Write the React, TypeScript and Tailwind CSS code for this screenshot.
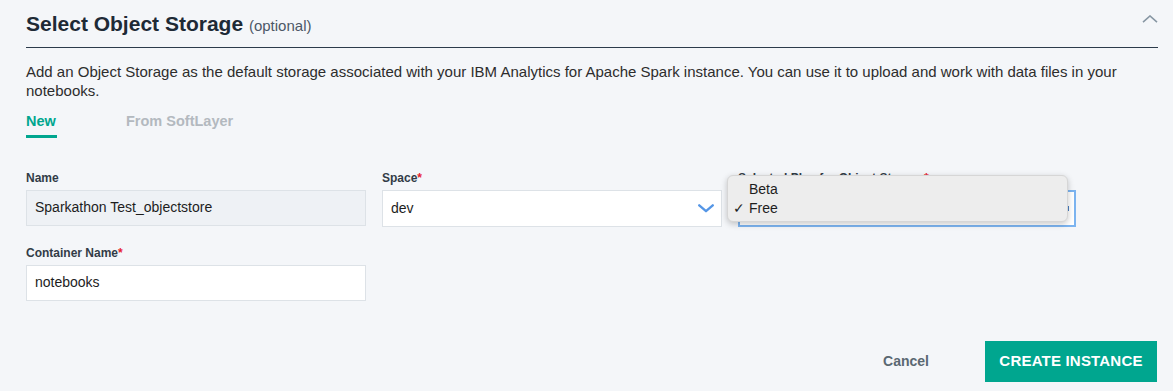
import { useState } from "react";

const font = { fontFamily: '"Liberation Sans", Arial, sans-serif' };

function Label({ text, required }: { text: string; required?: boolean }) {
  return (
    <p className="mb-[4px] h-[16px] text-[12px] font-bold leading-[16px] text-[#323c47]">
      {text}
      {required && <span className="text-[#e71d32]">*</span>}
    </p>
  );
}

function Chevron({ className }: { className?: string }) {
  return (
    <svg viewBox="0 0 18 10" className={className} fill="none">
      <path d="M1.5 1.5 9 8l7.5-6.5" stroke="currentColor" strokeWidth="2.6" strokeLinecap="round" strokeLinejoin="round" />
    </svg>
  );
}

export default function App() {
  const [tab, setTab] = useState("new");

  return (
    <div style={font} className="relative h-[391px] w-[1173px] overflow-hidden bg-[#f4f6f9] pl-[26px] pr-[15px]">
      {/* header */}
      <div className="flex h-[48px] items-center justify-between border-b border-[#2c3b4b]">
        <h2 className="pb-[1px] text-[21px] font-bold leading-none text-[#1e2a36]">
          Select Object Storage{" "}
          <span className="text-[15px] font-normal text-[#4c5866]">(optional)</span>
        </h2>
        <svg viewBox="0 0 16 8" className="mb-[24px] h-[8px] w-[16px] self-end text-[#8796a3]" fill="none">
          <path d="M1 7.2 8 1l7 6.2" stroke="currentColor" strokeWidth="1.6" />
        </svg>
      </div>

      <p className="mt-[14px] text-[15px] leading-[19px] text-[#2d2d2d]">
        <span className="whitespace-nowrap">
          Add an Object Storage as the default storage associated with your IBM Analytics for Apache Spark instance. You can use it to upload and work with data files in your
        </span>
        <br />
        notebooks.
      </p>

      {/* tabs */}
      <div className="mt-[11px] flex text-[14.5px] font-bold">
        <button
          onClick={() => setTab("new")}
          className={tab === "new" ? "w-[31px] border-b-[3px] border-[#00a68f] pb-[2px] text-left text-[#00a68f]" : "w-[31px] pb-[5px] text-left text-[#b3b9bf]"}
        >
          New
        </button>
        <button
          onClick={() => setTab("softlayer")}
          className={tab === "softlayer" ? "ml-[69px] border-b-[3px] border-[#00a68f] pb-[2px] text-[#00a68f]" : "ml-[69px] pb-[5px] text-[#b3b9bf]"}
        >
          From SoftLayer
        </button>
      </div>

      {/* fields */}
      <div className="mt-[32px] grid grid-cols-[340px_340px_338px] gap-x-[16px] gap-y-[18px]">
        <div>
          <Label text="Name" />
          <div className="flex h-[36px] items-center border border-[#dde2e7] bg-[#eef1f5] px-[8px] text-[14px] text-[#1d1d1d]">
            Sparkathon Test_objectstore
          </div>
        </div>
        <div>
          <Label text="Space" required />
          <div className="flex h-[37px] items-center justify-between border border-[#dde2e7] bg-white pl-[8px] pr-[6px] text-[14px] text-[#1d1d1d]">
            dev
            <Chevron className="h-[9px] w-[18px] text-[#5596e6]" />
          </div>
        </div>
        <div>
          <Label text="Selected Plan for Object Storage" required />
          <div className="flex h-[37px] items-center justify-end border-2 border-[#7cb4f0] bg-white pr-[5px]">
            <span className="h-[5px] w-[3px] bg-[#4a7fc1]" />
          </div>
        </div>
        <div>
          <Label text="Container Name" required />
          <div className="flex h-[36px] items-center border border-[#dde2e7] bg-white px-[8px] text-[14px] text-[#1d1d1d]">
            notebooks
          </div>
        </div>
      </div>

      {/* actions */}
      <div className="absolute bottom-[9px] right-[16px] flex items-center gap-[56px]">
        <button className="text-[14px] font-bold text-[#5a6872]">Cancel</button>
        <button className="h-[41px] w-[172px] bg-[#00a68f] text-[15px] font-bold tracking-[0.2px] text-white">
          CREATE INSTANCE
        </button>
      </div>

      {/* open native select menu */}
      <div className="absolute left-[727px] top-[175px] h-[47px] w-[341px] rounded-[6px] border border-[#d6d6d6] bg-[#ededed] py-[4px] text-[14px] leading-[20px] text-[#1e1e1e] shadow-[0_2px_6px_rgba(0,0,0,0.22)]">
        <div className="pl-[21px] leading-[19px]">Beta</div>
        <div className="flex leading-[19px]">
          <span className="w-[21px] pl-[5px]">✓</span>
          Free
        </div>
      </div>
    </div>
  );
}
